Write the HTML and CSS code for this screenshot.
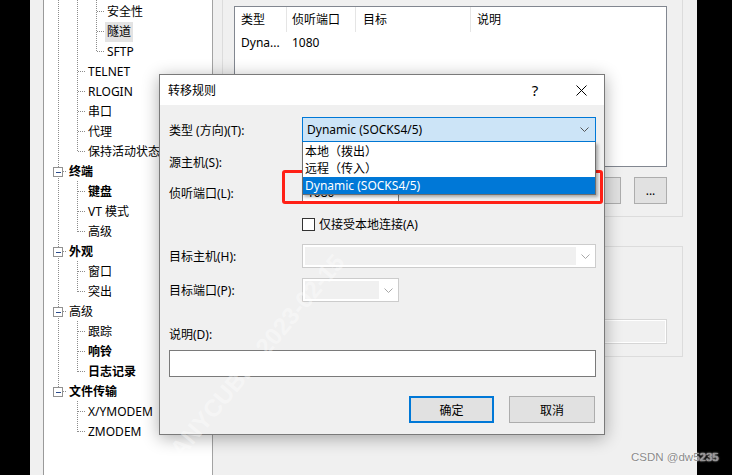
FILE: index.html
```html
<!DOCTYPE html>
<html lang="zh-CN">
<head>
<meta charset="utf-8">
<title>转移规则</title>
<link rel="stylesheet" href="styles.css">
</head>
<body>

<div class="screen">
  <div class="edge"></div>
  <div class="gutter"></div>

  <div class="tree">
    <svg class="tree-lines" width="168" height="475" viewBox="0 0 168 475">
      <g stroke="#8c8c8c" stroke-width="1" stroke-dasharray="1 1" fill="none">
        <!-- verticals -->
        <line x1="14.5" y1="0" x2="14.5" y2="391"/>
        <line x1="33.5" y1="0" x2="33.5" y2="152"/>
        <line x1="33.5" y1="181" x2="33.5" y2="232"/>
        <line x1="33.5" y1="261" x2="33.5" y2="292"/>
        <line x1="33.5" y1="321" x2="33.5" y2="372"/>
        <line x1="33.5" y1="401" x2="33.5" y2="432"/>
        <line x1="52.5" y1="0" x2="52.5" y2="52"/>
        <!-- level 3 -->
        <line x1="53" y1="11.5" x2="61" y2="11.5"/>
        <line x1="53" y1="31.5" x2="61" y2="31.5"/>
        <line x1="53" y1="51.5" x2="61" y2="51.5"/>
        <!-- level 2 -->
        <line x1="34" y1="71.5" x2="42" y2="71.5"/>
        <line x1="34" y1="91.5" x2="42" y2="91.5"/>
        <line x1="34" y1="111.5" x2="42" y2="111.5"/>
        <line x1="34" y1="131.5" x2="42" y2="131.5"/>
        <line x1="34" y1="151.5" x2="42" y2="151.5"/>
        <line x1="34" y1="191.5" x2="42" y2="191.5"/>
        <line x1="34" y1="211.5" x2="42" y2="211.5"/>
        <line x1="34" y1="231.5" x2="42" y2="231.5"/>
        <line x1="34" y1="271.5" x2="42" y2="271.5"/>
        <line x1="34" y1="291.5" x2="42" y2="291.5"/>
        <line x1="34" y1="331.5" x2="42" y2="331.5"/>
        <line x1="34" y1="351.5" x2="42" y2="351.5"/>
        <line x1="34" y1="371.5" x2="42" y2="371.5"/>
        <line x1="34" y1="411.5" x2="42" y2="411.5"/>
        <line x1="34" y1="431.5" x2="42" y2="431.5"/>
        <!-- level 1 -->
        <line x1="19" y1="171.5" x2="23" y2="171.5"/>
        <line x1="19" y1="251.5" x2="23" y2="251.5"/>
        <line x1="19" y1="311.5" x2="23" y2="311.5"/>
        <line x1="19" y1="391.5" x2="23" y2="391.5"/>
      </g>
      <g fill="#fff" stroke="#919191">
        <rect x="9.5" y="167.5" width="9" height="9"/>
        <rect x="9.5" y="247.5" width="9" height="9"/>
        <rect x="9.5" y="307.5" width="9" height="9"/>
        <rect x="9.5" y="387.5" width="9" height="9"/>
      </g>
      <g stroke="#2b4c8c">
        <line x1="12" y1="172.5" x2="17" y2="172.5"/>
        <line x1="12" y1="252.5" x2="17" y2="252.5"/>
        <line x1="12" y1="312.5" x2="17" y2="312.5"/>
        <line x1="12" y1="392.5" x2="17" y2="392.5"/>
      </g>
    </svg>

    <div class="node l3"><span>安全性</span></div>
    <div class="node l3 sel"><span>隧道</span></div>
    <div class="node l3"><span>SFTP</span></div>
    <div class="node l2"><span>TELNET</span></div>
    <div class="node l2"><span>RLOGIN</span></div>
    <div class="node l2"><span>串口</span></div>
    <div class="node l2"><span>代理</span></div>
    <div class="node l2"><span>保持活动状态</span></div>
    <div class="node l1 bold"><span>终端</span></div>
    <div class="node l2 bold"><span>键盘</span></div>
    <div class="node l2"><span>VT 模式</span></div>
    <div class="node l2"><span>高级</span></div>
    <div class="node l1 bold"><span>外观</span></div>
    <div class="node l2"><span>窗口</span></div>
    <div class="node l2"><span>突出</span></div>
    <div class="node l1"><span>高级</span></div>
    <div class="node l2"><span>跟踪</span></div>
    <div class="node l2 bold"><span>响铃</span></div>
    <div class="node l2 bold"><span>日志记录</span></div>
    <div class="node l1 bold"><span>文件传输</span></div>
    <div class="node l2"><span>X/YMODEM</span></div>
    <div class="node l2"><span>ZMODEM</span></div>
  </div>

  <div class="pane">
    <div class="group top-group">
      <div class="listview">
        <div class="lv-head">
          <div class="col c1">类型</div>
          <div class="col c2">侦听端口</div>
          <div class="col c3">目标</div>
          <div class="col c4">说明</div>
        </div>
        <div class="lv-row">
          <div class="col c1">Dyna...</div>
          <div class="col c2">1080</div>
        </div>
      </div>
      <div class="btn-row">
        <button class="btn wide"></button>
        <button class="btn small">...</button>
      </div>
    </div>
    <div class="group low-group">
      <div class="field-off"></div>
    </div>
  </div>

  <div class="edge right"></div>
</div>

<div class="dialog">
  <div class="titlebar">
    <div class="title">转移规则</div>
    <div class="tb-btn help">?</div>
    <div class="tb-btn">
      <svg width="11" height="11" viewBox="0 0 11 11"><path d="M0.5 0.5 L10.5 10.5 M10.5 0.5 L0.5 10.5" stroke="#000" stroke-width="1"/></svg>
    </div>
  </div>

  <div class="dialog-body">
    <div class="row r-type">
      <div class="label">类型 (方向)(T):</div>
      <div class="combo active">
        <span>Dynamic (SOCKS4/5)</span>
        <svg class="chev" width="9" height="5" viewBox="0 0 9 5"><path d="M0.5 0.5 L4.5 4.5 L8.5 0.5" stroke="#555" fill="none"/></svg>
        <div class="droplist">
          <div class="opt">本地（拨出）</div>
          <div class="opt">远程（传入）</div>
          <div class="opt on">Dynamic (SOCKS4/5)</div>
        </div>
      </div>
    </div>

    <div class="row r-src">
      <div class="label">源主机(S):</div>
      <div class="input wide-input"></div>
    </div>

    <div class="row r-port">
      <div class="label">侦听端口(L):</div>
      <div class="input short-input">1080</div>
    </div>

    <div class="row r-check">
      <div class="check"></div>
      <span>仅接受本地连接(A)</span>
    </div>

    <div class="row r-host">
      <div class="label">目标主机(H):</div>
      <div class="combo-off wide-input">
        <div class="edit"></div>
        <svg class="chev-off" width="9" height="5" viewBox="0 0 9 5"><path d="M0.5 0.5 L4.5 4.5 L8.5 0.5" stroke="#a8a8a8" fill="none"/></svg>
      </div>
    </div>

    <div class="row r-tport">
      <div class="label">目标端口(P):</div>
      <div class="combo-off short-input">
        <div class="edit"></div>
        <svg class="chev-off" width="9" height="5" viewBox="0 0 9 5"><path d="M0.5 0.5 L4.5 4.5 L8.5 0.5" stroke="#a8a8a8" fill="none"/></svg>
      </div>
    </div>

    <div class="desc-label">说明(D):</div>
    <div class="input desc"></div>

    <div class="actions">
      <button class="btn ok">确定</button>
      <button class="btn cancel">取消</button>
    </div>
  </div>
</div>

<div class="callout"></div>

<div class="watermark wm1">ANYCUBIC 2023-02-15</div>

<div class="csdn">CSDN @dw5235</div>

</body>
</html>
```

FILE: styles.css
```css
html, body {
  margin: 0;
  padding: 0;
}
body {
  width: 732px;
  height: 475px;
  overflow: hidden;
  position: relative;
  background: #000;
  color: #000;
  font-family: "Noto Sans", "Noto Sans CJK SC", sans-serif;
  font-size: 12px;
}
button {
  font-family: inherit;
  font-size: 12px;
  color: #000;
  padding: 0;
}

.screen {
  display: flex;
  height: 475px;
  overflow: hidden;
}
.edge {
  width: 30px;
  background: #000;
}
.edge.right {
  width: 35px;
}
.gutter {
  width: 13px;
  background: #f0f0f0;
}

/* tree on the left */
.tree {
  width: 170px;
  box-sizing: border-box;
  border-left: 1px solid #9a9a9a;
  border-right: 1px solid #a3a3a3;
  background: #fff;
  position: relative;
  padding-top: 2px;
}
.tree-lines {
  position: absolute;
  left: 0;
  top: 0;
}
.node {
  position: relative;
  height: 20px;
  line-height: 20px;
  white-space: nowrap;
}
.node span {
  display: inline-block;
  padding: 0 2px;
}
.l1 { padding-left: 23px; }
.l2 { padding-left: 42px; }
.l3 { padding-left: 61px; }
.node.bold span {
  font-weight: 700;
}
.node.sel span {
  background: #e3e3e3;
}

/* right side of the options window */
.pane {
  width: 484px;
  box-sizing: border-box;
  background: #f0f0f0;
  padding-left: 9px;
}
.group {
  width: 461px;
  box-sizing: border-box;
  border: 1px solid #dcdcdc;
}
.top-group {
  margin-top: -10px;
  height: 227px;
  padding: 15px 15px 0 11px;
}
.listview {
  height: 161px;
  box-sizing: border-box;
  border: 1px solid #828790;
  background: #fff;
}
.lv-head {
  display: flex;
  height: 25px;
  line-height: 25px;
}
.lv-head .col {
  border-right: 1px solid #e5e5e5;
}
.lv-row {
  display: flex;
  height: 21px;
  line-height: 21px;
}
.col {
  box-sizing: border-box;
  white-space: nowrap;
  overflow: hidden;
}
.c1 { width: 52px; padding-left: 6px; }
.c2 { width: 69px; padding-left: 5px; }
.c3 { width: 115px; padding-left: 7px; }
.c4 { flex: 1; padding-left: 6px; border-right: none !important; }

.btn-row {
  display: flex;
  justify-content: flex-end;
  gap: 13px;
  margin-top: 10px;
}
.btn {
  height: 27px;
  box-sizing: border-box;
  background: #e1e1e1;
  border: 1px solid #adadad;
}
.btn.wide { width: 75px; }
.btn.small { width: 33px; }

.low-group {
  margin-top: 29px;
  height: 111px;
  padding: 72px 15px 0 11px;
}
.field-off {
  height: 25px;
  box-sizing: border-box;
  border: 1px solid #d6d6d6;
  background: #f0f0f0;
  box-shadow: inset 0 0 0 1px #fff;
}

/* dialog */
.dialog {
  position: absolute;
  left: 159px;
  top: 74px;
  width: 446px;
  height: 361px;
  box-sizing: border-box;
  border: 1px solid #7a7a7a;
  background: #f0f0f0;
  box-shadow: 0 3px 16px rgba(0, 0, 0, 0.32);
  display: flex;
  flex-direction: column;
}
.titlebar {
  height: 30px;
  background: #fff;
  display: flex;
  align-items: center;
}
.title {
  flex: 1;
  padding-left: 8px;
}
.tb-btn {
  width: 46px;
  height: 30px;
  display: flex;
  align-items: center;
  justify-content: center;
}
.tb-btn.help {
  font-size: 15px;
}
.dialog-body {
  padding: 12px 8px 0 9px;
}
.row {
  display: flex;
  align-items: center;
}
.label {
  width: 133px;
  white-space: nowrap;
}
.r-src { margin-top: 8px; height: 24px; }
.r-port { margin-top: 7px; height: 23px; }
.r-check { margin-top: 10px; height: 20px; padding-left: 133px; }
.r-host { margin-top: 10px; height: 24px; }
.r-tport { margin-top: 10px; height: 24px; }

.combo {
  position: relative;
  width: 294px;
  height: 25px;
  box-sizing: border-box;
  border: 1px solid #0078d7;
  background: #cce4f7;
  display: flex;
  align-items: center;
  padding-left: 4px;
}
.combo .chev {
  margin-left: auto;
  margin-right: 6px;
}
.droplist {
  position: absolute;
  left: -1px;
  top: calc(100% + 1px);
  width: 294px;
  box-sizing: border-box;
  padding-top: 1px;
  background: #fff;
  border: 1px solid #6e6e6e;
  border-top: none;
  box-shadow: 2px 2px 3px rgba(0, 0, 0, 0.3);
  z-index: 2;
}
.opt {
  height: 17px;
  line-height: 17px;
  padding-left: 2px;
  white-space: nowrap;
}
.opt.on {
  background: #0078d7;
  color: #fff;
}

.input {
  height: 100%;
  box-sizing: border-box;
  border: 1px solid #7a7a7a;
  background: #fff;
}
.wide-input { width: 294px; }
.short-input {
  width: 97px;
  padding-left: 4px;
  display: flex;
  align-items: center;
}

.check {
  width: 13px;
  height: 13px;
  box-sizing: border-box;
  border: 1px solid #333;
  background: #fff;
  margin-right: 4px;
}

.combo-off {
  height: 24px;
  box-sizing: border-box;
  border: 1px solid #cccccc;
  background: #fff;
  display: flex;
  align-items: stretch;
  padding: 2px 0 2px 2px;
}
.combo-off.short-input {
  padding-left: 2px;
}
.combo-off .edit {
  flex: 1;
  background: #f0f0f0;
}
.chev-off {
  width: 19px;
  align-self: center;
  padding: 0 5px;
  box-sizing: border-box;
}

.desc-label {
  margin-top: 25px;
  line-height: 16px;
}
.desc {
  margin-top: 7px;
  width: 427px;
  height: 27px;
}
.actions {
  display: flex;
  justify-content: flex-end;
  gap: 15px;
  margin-top: 19px;
  margin-right: 1px;
}
.btn.ok {
  width: 85px;
  border: 2px solid #0078d7;
}
.btn.cancel {
  width: 86px;
}

/* red annotation drawn over the screenshot */
.callout {
  position: absolute;
  left: 282px;
  top: 170px;
  width: 321px;
  height: 34px;
  box-sizing: border-box;
  border: 3px solid #ff2016;
  border-radius: 3px;
}

.watermark {
  position: absolute;
  white-space: nowrap;
  font-family: "Liberation Sans", sans-serif;
  font-weight: 700;
  font-size: 24px;
  color: rgba(255, 255, 255, 0.4);
  transform-origin: left center;
  pointer-events: none;
}
.wm1 {
  left: 175px;
  top: 440px;
  transform: rotate(-50deg);
}

.csdn {
  position: absolute;
  left: 631px;
  top: 451px;
  font-family: "Liberation Sans", sans-serif;
  font-size: 11.5px;
  color: #8a8a8a;
  text-shadow: 0 0 2px #fff, 0 0 1px #fff;
}
```
